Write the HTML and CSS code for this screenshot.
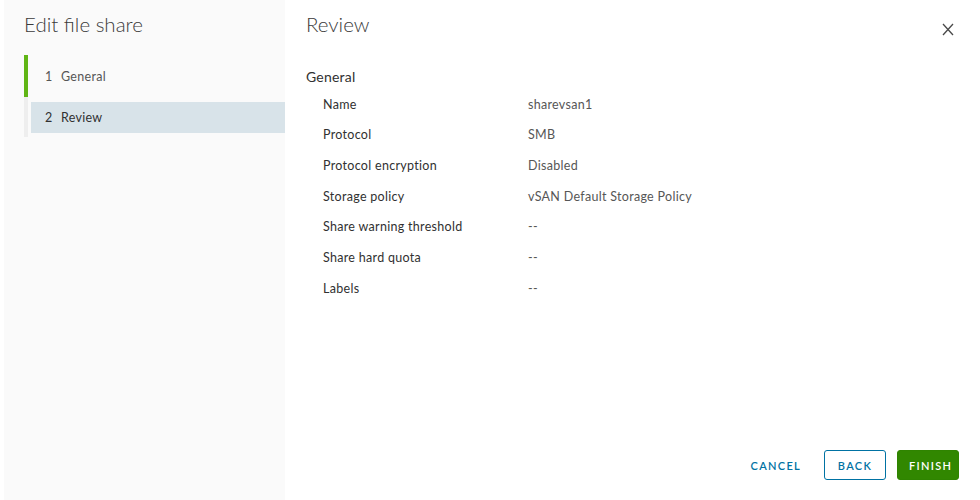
FILE: index.html
```html
<!DOCTYPE html>
<html>
<head>
<meta charset="utf-8">
<link rel="stylesheet" href="styles.css">
</head>
<body>
<div class="modal">
  <aside class="sidebar">
    <h1 class="side-title">Edit file share</h1>
    <nav class="steps">
      <div class="step step-done"><span class="num">1</span><span class="label">General</span></div>
      <div class="step-wrap">
        <div class="step step-active"><span class="num">2</span><span class="label">Review</span></div>
      </div>
    </nav>
  </aside>
  <main class="content">
    <header class="content-head">
      <h2 class="content-title">Review</h2>
      <button class="close" aria-label="Close">
        <svg width="12" height="13" viewBox="0 0 12 13"><path d="M1 1 L11 12 M11 1 L1 12" stroke="#4a4a4a" stroke-width="1.3" fill="none"/></svg>
      </button>
    </header>
    <section class="review">
      <h3 class="section-title">General</h3>
      <div class="grid">
        <div class="k">Name</div><div class="v">sharevsan1</div>
        <div class="k">Protocol</div><div class="v">SMB</div>
        <div class="k">Protocol encryption</div><div class="v">Disabled</div>
        <div class="k">Storage policy</div><div class="v">vSAN Default Storage Policy</div>
        <div class="k">Share warning threshold</div><div class="v">--</div>
        <div class="k">Share hard quota</div><div class="v">--</div>
        <div class="k">Labels</div><div class="v">--</div>
      </div>
    </section>
    <footer class="actions">
      <button class="btn btn-link">CANCEL</button>
      <button class="btn btn-outline">BACK</button>
      <button class="btn btn-success">FINISH</button>
    </footer>
  </main>
</div>
</body>
</html>
```
FILE: styles.css
```css
* { box-sizing: border-box; }
html, body { margin: 0; padding: 0; background: #fff; }
body { font-family: Lato, "Noto Sans", sans-serif; color: #313131; }

.modal { display: flex; height: 500px; width: 980px; }

.sidebar {
  margin-left: 4px;
  width: 281px;
  background: #fafafa;
  padding: 12px 0 0 20px;
  display: flex;
  flex-direction: column;
}
.side-title {
  margin: 0;
  font-size: 20.5px;
  line-height: 24px;
  font-weight: 300;
  color: #3a3a3a;
}
.steps { margin-top: 19px; display: flex; flex-direction: column; }
.step {
  display: flex;
  align-items: center;
  font-size: 12.5px;
  color: #565656;
  letter-spacing: 0.3px;
}
.step .num { width: 16px; }
.step-done {
  height: 42px;
  border-left: 4px solid #60b515;
  padding-left: 17px;
}
.step-wrap {
  border-left: 4px solid #eeeeee;
  padding: 5px 0 4px 3px;
}
.step-active {
  height: 31px;
  background: #d8e3e9;
  padding-left: 14px;
  color: #313131;
}

.content {
  flex: 1;
  display: flex;
  flex-direction: column;
  padding: 12px 21px 20px 21px;
}
.content-head { display: flex; justify-content: space-between; align-items: flex-start; }
.content-title {
  margin: 0;
  font-size: 20.5px;
  line-height: 24px;
  font-weight: 300;
  color: #3a3a3a;
}
.close {
  border: 0;
  background: none;
  padding: 0;
  margin-top: 11px;
  margin-right: 5px;
  width: 12px;
  height: 13px;
  cursor: pointer;
}
.close svg { display: block; }

.review { flex: 1; margin-top: 32px; }
.section-title {
  margin: 0;
  font-size: 14px;
  line-height: 18px;
  font-weight: 400;
  color: #313131;
  letter-spacing: 0.2px;
}
.grid {
  display: grid;
  grid-template-columns: 205px 1fr;
  grid-auto-rows: 30.67px;
  align-items: center;
  padding-left: 17px;
  margin-top: 3px;
}
.k, .v { font-size: 12.5px; letter-spacing: 0.3px; }
.k { color: #313131; }
.v { color: #565656; }

.actions { display: flex; justify-content: flex-end; gap: 11px; }
.btn {
  height: 30px;
  font-family: inherit;
  font-size: 11px;
  font-weight: 600;
  letter-spacing: 1.3px;
  border-radius: 3px;
  padding: 0 11px;
  cursor: pointer;
}
.btn-link { background: none; border: 1px solid transparent; color: #0072a3; margin-right: 0; }
.btn-outline { background: #fff; border: 1px solid #0072a3; color: #0072a3; width: 62px; }
.btn-success { background: #318700; border: 1px solid #2f8400; color: #fff; width: 62px; }
```
